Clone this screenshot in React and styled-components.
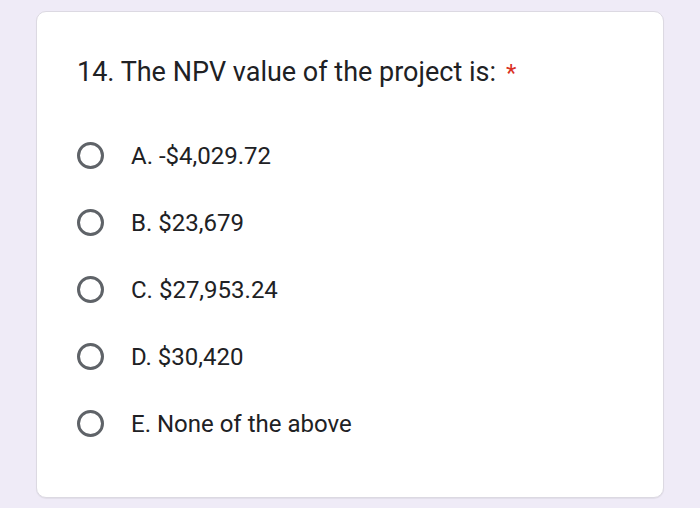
import React from "react";
import styled, { createGlobalStyle } from "styled-components";

const Global = createGlobalStyle`
  html, body { margin: 0; padding: 0; }
  body { background: #efebf7; width: 700px; height: 508px; overflow: hidden; }
`;

const Page = styled.div`
  padding: 11px 36px 10px 36px;
  box-sizing: border-box;
  height: 508px;
`;

const Card = styled.div`
  background: #ffffff;
  border: 1px solid #dcd9e2;
  border-radius: 10px;
  height: 487px;
  box-sizing: border-box;
  padding: 44px 40px 0 40px;
  box-shadow: 0 1px 1px rgba(0,0,0,0.06);
`;

const Title = styled.div`
  font-family: Roboto, "Open Sans", sans-serif;
  font-size: 27px;
  line-height: 32px;
  color: #202124;
  margin-bottom: 53px;
`;

const Star = styled.span`
  color: #d93025;
  margin-left: 10px;
  font-size: 24px;
`;

const List = styled.div`
  display: flex;
  flex-direction: column;
  gap: 40px;
`;

const Row = styled.div`
  display: flex;
  align-items: center;
  height: 27px;
`;

const Radio = styled.span`
  width: 21px;
  height: 21px;
  border: 3px solid #5f6368;
  border-radius: 50%;
  flex: none;
  margin-right: 27px;
`;

const Label = styled.span`
  font-family: Roboto, sans-serif;
  font-size: 24px;
  color: #202124;
`;

const options = ["A. -$4,029.72", "B. $23,679", "C. $27,953.24", "D. $30,420", "E. None of the above"];

export default function App() {
  return (
    <>
      <Global />
      <Page>
        <Card>
          <Title>14. The NPV value of the project is:<Star>*</Star></Title>
          <List>
            {options.map((o) => (
              <Row key={o}>
                <Radio />
                <Label>{o}</Label>
              </Row>
            ))}
          </List>
        </Card>
      </Page>
    </>
  );
}
